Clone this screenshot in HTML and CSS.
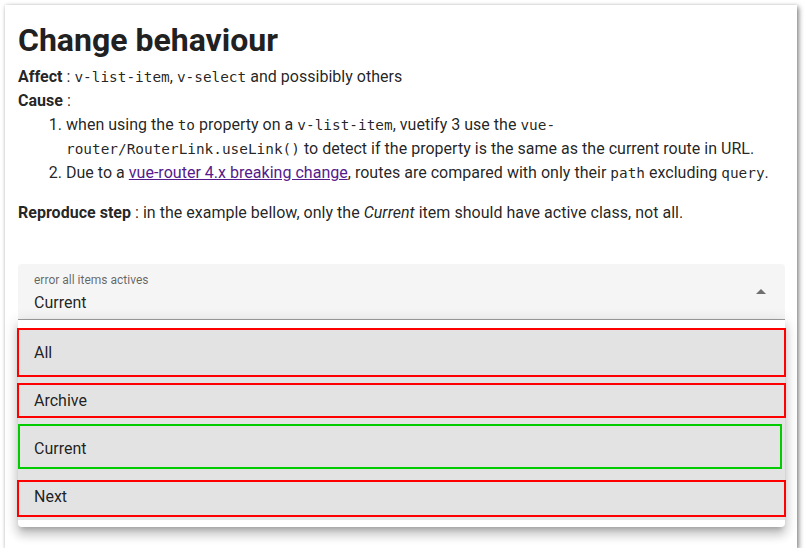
FILE: index.html
```html
<!DOCTYPE html>
<html>
<head>
<meta charset="utf-8">
<link rel="stylesheet" href="styles.css">
</head>
<body>
<div class="page">
  <div class="card">
    <h1 class="title">Change behaviour</h1>
    <p class="line"><strong>Affect</strong> : <code>v-list-item</code>, <code>v-select</code> and possibibly others</p>
    <p class="line"><strong>Cause</strong> :</p>
    <ol class="causes">
      <li>when using the <code>to</code> property on a <code>v-list-item</code>, vuetify 3 use the <code>vue-router/RouterLink.useLink()</code> to detect if the property is the same as the current route in URL.</li>
      <li>Due to a <a class="link" href="#">vue-router 4.x breaking change</a>, routes are compared with only their <code>path</code> excluding <code>query</code>.</li>
    </ol>
    <p class="line"><strong>Reproduce step</strong> : in the example bellow, only the <em>Current</em> item should have active class, not all.</p>

    <div class="select">
      <div class="select-text">
        <div class="select-label">error all items actives</div>
        <div class="select-value">Current</div>
      </div>
      <svg class="select-arrow" width="24" height="24" viewBox="0 0 24 24"><path d="M7,15L12,10L17,15H7Z" fill="#6f6f6f"/></svg>
    </div>
    <div class="menu">
      <div class="menu-list">
        <div class="item item-all">All</div>
        <div class="item item-archive">Archive</div>
        <div class="item item-current">Current</div>
        <div class="item item-next">Next</div>
      </div>
    </div>
  </div>
</div>
</body>
</html>
```
FILE: styles.css
```css
html, body {
  margin: 0;
  padding: 0;
  background: #ffffff;
}
body {
  font-family: Roboto, "Liberation Sans", sans-serif;
  font-size: 16px;
  color: rgba(0, 0, 0, 0.87);
}
.page {
  padding: 5px 9px 0 5px;
}
.card {
  background: #ffffff;
  padding: 16px 12px 21px 13px;
  box-shadow: 2px 2px 5px rgba(0, 0, 0, 0.45), 0 0 3px rgba(0, 0, 0, 0.12);
}
.title {
  font-size: 32px;
  font-weight: 700;
  line-height: 38px;
  margin: 0 0 6px 0;
  color: #212121;
}
.line {
  margin: 0;
  line-height: 24px;
  letter-spacing: 0.02px;
}
strong {
  font-weight: 700;
}
code {
  font-family: "DejaVu Sans Mono", monospace;
  font-size: 14.4px;
  line-height: 1;
  letter-spacing: 0;
}
.causes {
  margin: 0 0 16px 0;
  padding-left: 48px;
  line-height: 24px;
  letter-spacing: 0.02px;
}
.link {
  color: #551a8b;
  text-decoration: underline;
}
.select {
  margin-top: 39px;
  height: 55px;
  background: #f5f5f5;
  border-bottom: 1px solid #9e9e9e;
  border-radius: 4px 4px 0 0;
  display: flex;
  align-items: center;
  padding: 0 12px 0 16px;
}
.select-text {
  flex: 1;
  align-self: flex-start;
  padding-top: 8px;
}
.select-label {
  font-size: 12px;
  line-height: 16px;
  color: rgba(0, 0, 0, 0.6);
}
.select-value {
  margin-top: 3px;
  font-size: 16px;
  line-height: 24px;
  color: rgba(0, 0, 0, 0.87);
}
.select-arrow {
  display: block;
  margin-top: -2px;
}
.menu {
  background: #ffffff;
  padding: 8px 0 7px 0;
  border-radius: 0 0 4px 4px;
  box-shadow: 0 5px 5px -3px rgba(0, 0, 0, 0.2), 0 8px 10px 1px rgba(0, 0, 0, 0.14), 0 3px 14px 2px rgba(0, 0, 0, 0.12);
}
.menu-list {
  background: #e3e3e3;
}
.item {
  position: relative;
  height: 48px;
  display: flex;
  align-items: center;
  padding-left: 16px;
  font-size: 16px;
  color: rgba(0, 0, 0, 0.87);
}
.item::after {
  content: "";
  position: absolute;
  border: 2px solid #ff0000;
}
.item-all::after {
  top: 0;
  bottom: -1px;
  left: -1px;
  right: -1px;
}
.item-archive::after {
  top: 7px;
  bottom: 6px;
  left: -1px;
  right: -1px;
}
.item-current::after {
  top: 0;
  bottom: 3px;
  left: 0;
  right: 3px;
  border-color: #00cc00;
}
.item-next::after {
  top: 8px;
  bottom: 3px;
  left: -1px;
  right: -1px;
}
```
